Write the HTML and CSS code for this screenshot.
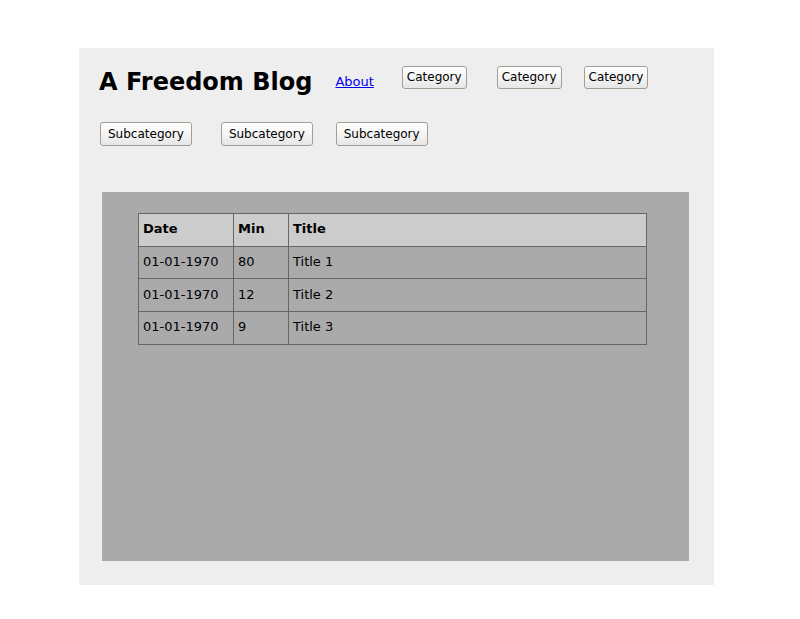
FILE: index.html
```html
<!DOCTYPE html>
<html>
<head>
<meta charset="utf-8">
<link rel="stylesheet" href="styles.css">
</head>
<body>
<div class="page">
  <header class="header">
    <h1 class="title">A Freedom Blog</h1>
    <a class="about" href="#">About</a>
    <nav class="cats">
      <button class="btn cat cat-1">Category</button>
      <button class="btn cat cat-2">Category</button>
      <button class="btn cat cat-3">Category</button>
    </nav>
  </header>
  <nav class="subcats">
    <button class="btn sub sub-1">Subcategory</button>
    <button class="btn sub sub-2">Subcategory</button>
    <button class="btn sub sub-3">Subcategory</button>
  </nav>
  <main class="content">
    <table class="posts">
      <colgroup>
        <col class="c-date">
        <col class="c-min">
        <col class="c-title">
      </colgroup>
      <thead>
        <tr><th>Date</th><th>Min</th><th>Title</th></tr>
      </thead>
      <tbody>
        <tr><td>01-01-1970</td><td>80</td><td>Title 1</td></tr>
        <tr><td>01-01-1970</td><td>12</td><td>Title 2</td></tr>
        <tr><td>01-01-1970</td><td>9</td><td>Title 3</td></tr>
      </tbody>
    </table>
  </main>
</div>
</body>
</html>
```

FILE: styles.css
```css
html, body {
  margin: 0;
  padding: 0;
  background: #ffffff;
  font-family: "DejaVu Sans", sans-serif;
}

.page {
  width: 635px;
  height: 537px;
  margin: 48px 0 0 79px;
  background: #eeeeee;
  box-sizing: border-box;
  display: flex;
  flex-direction: column;
}

.header {
  display: flex;
  align-items: flex-start;
  padding-left: 20px;
  height: 74px;
}

.title {
  margin: 20px 23px 0 0;
  font-size: 24px;
  line-height: 28px;
  font-weight: bold;
  color: #000;
}

.about {
  margin-top: 26px;
  margin-right: 28px;
  font-size: 13px;
  line-height: 15px;
  color: #0000ee;
}

.cats {
  display: flex;
  margin-top: 18px;
}

.btn {
  font-family: "DejaVu Sans", sans-serif;
  font-size: 12px;
  line-height: 15px;
  color: #000;
  border: 1px solid #a69d92;
  border-radius: 3px;
  background: linear-gradient(#ffffff 0%, #f4f4f4 50%, #e6e6e6 100%);
  margin: 0;
}

.cat {
  height: 23px;
  padding: 3px 4px;
}

.cat-2 { margin-left: 30px; }
.cat-3 { margin-left: 22px; }

.subcats {
  display: flex;
  padding-left: 21px;
}

.sub {
  height: 24px;
  padding: 3px 7px;
}

.sub-2 { margin-left: 29px; }
.sub-3 { margin-left: 23px; }

.content {
  margin: 46px 0 0 23px;
  width: 587px;
  height: 369px;
  background: #aaaaaa;
  padding: 21px 0 0 36px;
  box-sizing: border-box;
}

.posts {
  border-collapse: collapse;
  table-layout: fixed;
  width: 508px;
  font-size: 13px;
  line-height: 15px;
  color: #000;
}

.c-date { width: 95px; }
.c-min { width: 55px; }
.c-title { width: 358px; }

.posts th,
.posts td {
  border: 1px solid #666666;
  padding: 7.4px 4px 9.3px;
  text-align: left;
  white-space: nowrap;
}

.posts th {
  background: #cccccc;
  font-weight: bold;
}
```
